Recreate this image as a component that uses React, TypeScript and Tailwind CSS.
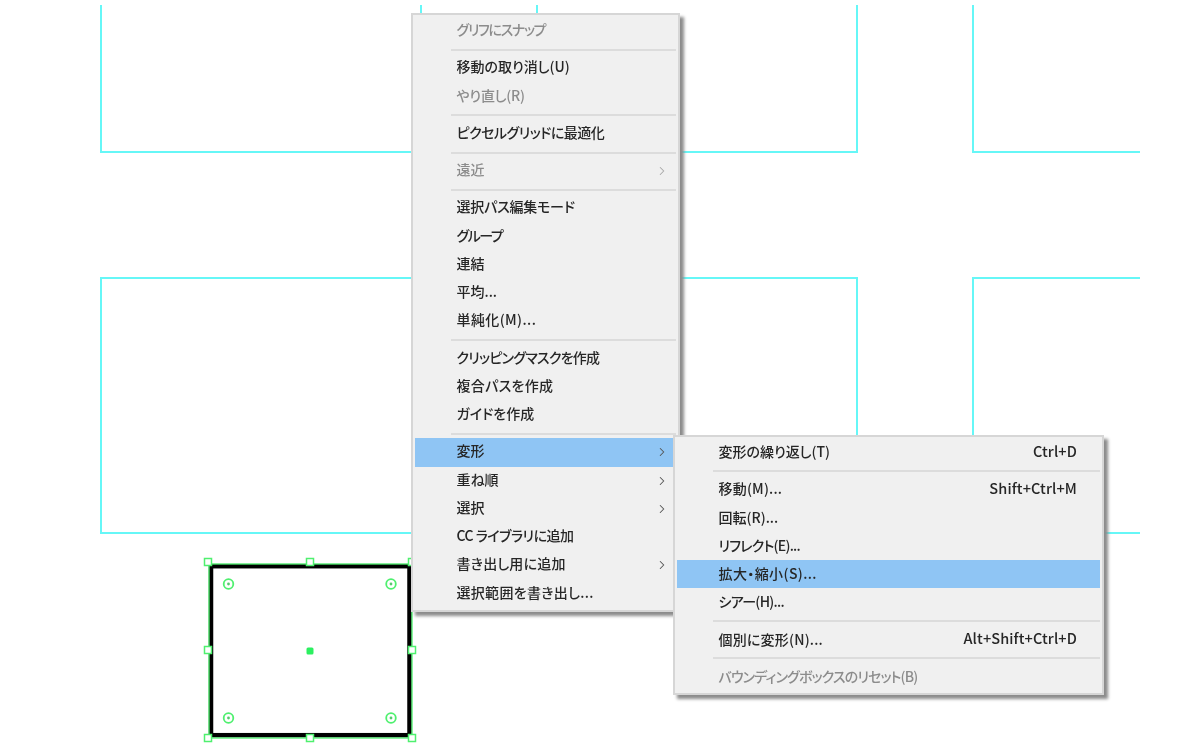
import { ChevronRight } from 'lucide-react';

type Item =
  | { sep: true }
  | { sep?: false; label: string; off?: boolean; arrow?: boolean; active?: boolean; keys?: string; fit?: string };

const mainItems: Item[] = [
  { label: 'グリフにスナップ', off: true, fit: 'tracking-[-1.3px]' },
  { sep: true },
  { label: '移動の取り消し(U)' },
  { label: 'やり直し(R)', off: true, fit: 'tracking-[-0.2px]' },
  { sep: true },
  { label: 'ピクセルグリッドに最適化', fit: 'tracking-[-0.5px]' },
  { sep: true },
  { label: '遠近', off: true, arrow: true },
  { sep: true },
  { label: '選択パス編集モード', fit: 'tracking-[-0.2px]' },
  { label: 'グループ', fit: 'tracking-[-1.5px]' },
  { label: '連結' },
  { label: '平均...' },
  { label: '単純化(M)...', fit: 'tracking-[0.4px]' },
  { sep: true },
  { label: 'クリッピングマスクを作成', fit: 'tracking-[-0.75px]' },
  { label: '複合パスを作成', fit: 'tracking-[0.3px]' },
  { label: 'ガイドを作成' },
  { sep: true },
  { label: '変形', arrow: true, active: true },
  { label: '重ね順', arrow: true },
  { label: '選択', arrow: true },
  { label: 'CC ライブラリに追加', fit: 'tracking-[-0.5px]' },
  { label: '書き出し用に追加', arrow: true, fit: 'tracking-[0.2px]' },
  { label: '選択範囲を書き出し...', fit: 'tracking-[0.3px]' },
];

const subItems: Item[] = [
  { label: '変形の繰り返し(T)', keys: 'Ctrl+D' },
  { sep: true },
  { label: '移動(M)...', keys: 'Shift+Ctrl+M', fit: 'tracking-[0.2px]' },
  { label: '回転(R)...' },
  { label: 'リフレクト(E)...', fit: 'tracking-[-0.75px]' },
  { label: '拡大・縮小(S)...', active: true, fit: 'tracking-[0.4px]' },
  { label: 'シアー(H)...', fit: 'tracking-[-0.7px]' },
  { sep: true },
  { label: '個別に変形(N)...', keys: 'Alt+Shift+Ctrl+D', fit: 'tracking-[0.2px]' },
  { sep: true },
  { label: 'バウンディングボックスのリセット(B)', off: true, fit: 'tracking-[-0.85px]' },
];

function MenuRows({ items, sub }: { items: Item[]; sub?: boolean }) {
  return (
    <>
      {items.map((item, i) =>
        item.sep ? (
          <div key={i} className="h-[9px] flex items-center pl-[36px]">
            <div className="h-[2px] w-full bg-[#dcdcdc]" />
          </div>
        ) : (
          <div
            key={i}
            className={`h-[28.25px] flex items-center justify-between pl-[41.5px] pr-[7px] ${
              sub ? 'pb-[2px]' : 'pb-[4px]'
            } ${item.active ? 'bg-[#8fc5f4]' : ''} ${item.off ? 'text-[#8c8c8c]' : 'text-[#262626]'}`}
          >
            <span className={`whitespace-nowrap ${item.fit ?? ''}`}>{item.label}</span>
            {item.arrow && (
              <ChevronRight
                size={14}
                strokeWidth={1.8}
                className={`mt-[4px] ${item.off ? 'text-[#a8a8a8]' : 'text-[#555555]'}`}
              />
            )}
            {item.keys && (
              <span className="whitespace-nowrap pr-[16px] text-[14.5px] tracking-[0.12px]">{item.keys}</span>
            )}
          </div>
        ),
      )}
    </>
  );
}

function SelectedShape() {
  const green = '#4ff06f';
  const handles = [
    [208, 562], [310, 562], [412, 562],
    [208, 650], [412, 650],
    [208, 738], [310, 738], [412, 738],
  ];
  const points = [
    [228.5, 584], [391, 584], [228.5, 718], [391, 718],
  ];
  return (
    <svg width="240" height="200" viewBox="190 550 240 200" className="absolute left-[190px] top-[550px] blur-[0.4px]">
      <rect x="211" y="566.2" width="198.5" height="169" fill="#fff" stroke="#000" strokeWidth="4.5" />
      <rect x="209" y="564" width="203" height="174" fill="none" stroke={green} strokeWidth="1.3" />
      {handles.map(([x, y]) => (
        <rect key={`${x}-${y}`} x={x - 3.5} y={y - 3.5} width="7" height="7" fill="#fff" stroke={green} strokeWidth="1.5" />
      ))}
      {points.map(([x, y]) => (
        <g key={`${x}-${y}`}>
          <circle cx={x} cy={y} r="4.8" fill="none" stroke={green} strokeWidth="1.8" />
          <circle cx={x} cy={y} r="1.4" fill="#55c96e" />
        </g>
      ))}
      <rect x="306.5" y="647.5" width="7" height="7" rx="1.5" fill="#2cf060" />
    </svg>
  );
}

function Guide() {
  return <div className="w-[322px] border-2 border-[#66f7f7]" />;
}

export default function App() {
  return (
    <div className="relative w-[1200px] h-[755px] overflow-hidden bg-white font-['Noto_Sans_CJK_JP',sans-serif] text-[14px] leading-none font-medium [font-feature-settings:'palt']">
      {/* guides, cut off by the artboard edges */}
      <div className="absolute left-0 top-[5px] w-[1140px] overflow-hidden pl-[100px] grid grid-cols-[436px_436px_322px] grid-rows-[148px_257px] gap-y-[124px]">
        <div className="w-[322px] border-2 border-t-0 border-[#66f7f7]" />
        <div className="w-[322px] border-2 border-t-0 border-[#66f7f7]" />
        <div className="w-[322px] border-2 border-t-0 border-[#66f7f7]" />
        <Guide />
        <Guide />
        <Guide />
      </div>

      <SelectedShape />

      {/* context menu */}
      <div className="absolute left-[411px] top-[13px] w-[269px] border-2 border-[#d6d6d6] bg-[#f0f0f0] pt-[2px] pb-[2px] px-[2px] shadow-[4px_4px_3px_#8c8c8c] blur-[0.35px]">
        <MenuRows items={mainItems} />
      </div>

      {/* transform submenu */}
      <div className="absolute left-[673px] top-[435px] w-[431px] border-2 border-[#d6d6d6] bg-[#f0f0f0] pt-px pb-[2px] px-[2px] shadow-[4px_4px_3px_#8c8c8c] blur-[0.35px]">
        <MenuRows items={subItems} sub />
      </div>
    </div>
  );
}
